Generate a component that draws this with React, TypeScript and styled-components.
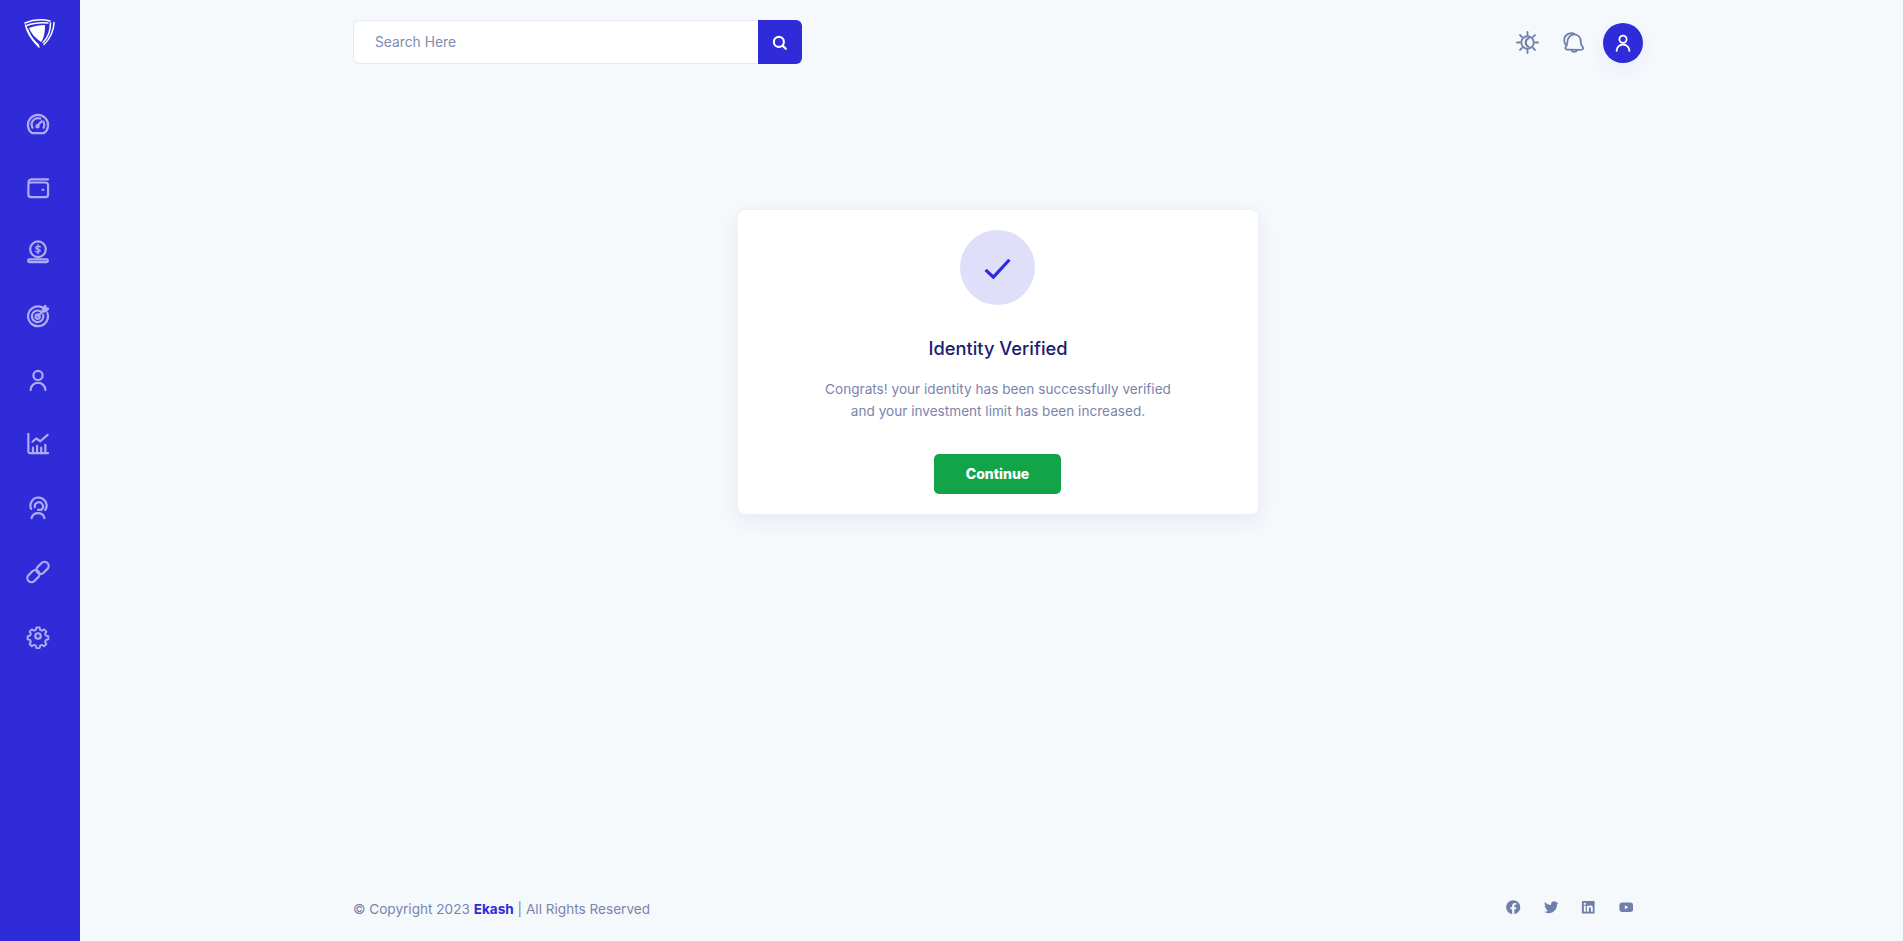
import styled, { createGlobalStyle } from 'styled-components';
import { FaFacebook, FaTwitter, FaLinkedin, FaYoutube } from 'react-icons/fa';

const GlobalStyle = createGlobalStyle`
  html, body {
    margin: 0;
    background: #f5f9fc;
    font-family: Inter, "Noto Sans", sans-serif;
  }
  * {
    box-sizing: border-box;
  }
`;

const GaugeIcon = () => (
  <svg viewBox="0 0 24 24">
    <path d="M5.500 22a11 11 0 1 1 13 0z" />
    <path d="M6 16a7 7 0 0 1 8.500-10" />
    <path d="M18 9.500a7 7 0 0 1 .1 6.500" />
    <path d="M11 14.200l5-5.200" />
    <circle cx="11.500" cy="14.500" r="1.200" />
  </svg>
);

const WalletIcon = () => (
  <svg viewBox="0 0 24 24">
    <path d="M23 2.500H5a3.500 3.500 0 0 0-3.500 3.500" />
    <rect x="1.500" y="6" width="21.500" height="16" rx="3" />
    <path d="M17 14h.8" />
  </svg>
);

const CoinIcon = () => (
  <svg viewBox="0 0 24 24">
    <circle cx="12" cy="9" r="8.500" />
    <path d="M14.500 6.500c-.6-1-4.600-1.200-5 .8-.2 2.200 5.200 1.200 5 3.400-.2 1.800-4.200 1.800-5.200.5M12 4v10" strokeWidth="1.500" />
    <rect x="1.200" y="20" width="21.600" height="3" rx="1.500" />
  </svg>
);

const TargetIcon = () => (
  <svg viewBox="0 0 24 24">
    <path d="M16.500 2.500a10.800 10.800 0 1 0 5.800 6.500" />
    <path d="M14.600 6.800a6.300 6.300 0 1 0 3 3.600" />
    <path d="M12.800 10.600a2.400 2.400 0 1 0 1.200 1.800" />
    <path d="M12 12l6-6" />
    <path d="M17 7l.4-3.600L20 1l.7 2.500 2.300.5L20.400 7z" fill="currentColor" />
  </svg>
);

const UserIcon = () => (
  <svg viewBox="0 0 24 24">
    <circle cx="12" cy="7" r="5" />
    <path d="M4 23a8 8 0 0 1 16 0" />
  </svg>
);

const ChartIcon = () => (
  <svg viewBox="0 0 24 24">
    <path d="M1.500 1v19.500a1.500 1.500 0 0 0 1.500 1.500h20" />
    <path d="M6.500 22v-6M11 22v-8M15.500 22v-6M20 22v-9" />
    <path d="M6 9.500l4-3.500 4.500 3 8-7" />
  </svg>
);

const SupportIcon = () => (
  <svg viewBox="0 0 24 24">
    <path d="M4.500 13a8.800 8.800 0 1 1 15.500 1" />
    <path d="M8.500 11a4.500 4.500 0 1 1 7 3h-3.500" />
    <path d="M5 23a7.200 7.200 0 0 1 14 0" />
  </svg>
);

const LinkIcon = () => (
  <svg viewBox="0 0 24 24">
    <rect x="9.500" y="3" width="15" height="9" rx="4.500" transform="rotate(-45 17 7.500)" />
    <rect x="-0.500" y="12" width="15" height="9" rx="4.500" transform="rotate(-45 7 16.500)" />
  </svg>
);

const GearIcon = () => (
  <svg viewBox="0 0 24 24">
    <path d="M10 1.500h4l.7 3 2.300 1 2.600-1.600 2.800 2.800-1.600 2.600 1 2.300 3 .7v4l-3 .7-1 2.300 1.600 2.600-2.800 2.800-2.600-1.600-2.300 1-.7 3h-4l-.7-3-2.300-1-2.600 1.600-2.800-2.800 1.600-2.600-1-2.300-3-.7v-4l3-.7 1-2.300-1.600-2.600 2.800-2.800 2.600 1.600 2.300-1z" transform="translate(1.400 1.400) scale(.88)" />
    <circle cx="12" cy="12" r="3" />
  </svg>
);

const navIcons = [
  GaugeIcon,
  WalletIcon,
  CoinIcon,
  TargetIcon,
  UserIcon,
  ChartIcon,
  SupportIcon,
  LinkIcon,
  GearIcon,
];

export default function App() {
  return (
    <>
      <GlobalStyle />
      <Page>
        <Sidebar>
          <Logo viewBox="0 0 32 30">
            <path d="M5 9C10 7 16 6 21 6c0 7-1 13-4 17C11 19 7 14 5 9z" fill="#fff" />
            <g fill="none" stroke="#fff" strokeWidth="1.500" strokeLinecap="round">
              <path d="M1 4C8 1 18 0 26 2" />
              <path d="M3 6.500C9 4 17 3.500 24 4" />
              <path d="M30 3.500C30 11 26 20 20 25.500" />
              <path d="M26.500 4C26.500 11 23.500 19 19 23.500" />
              <path d="M1.500 6C3 13 9 22 15 28" />
              <path d="M3.500 10.500C5.500 16 10 22.500 14.500 26" />
            </g>
          </Logo>
          <NavList>
            {navIcons.map((Icon, i) => (
              <NavItem key={i}>
                <Icon />
              </NavItem>
            ))}
          </NavList>
        </Sidebar>
        <Main>
          <Header>
            <SearchBox>
              <SearchInput placeholder="Search Here" />
              <SearchButton>
                <svg viewBox="0 0 24 24">
                  <circle cx="11" cy="11" r="8" />
                  <path d="M17 17l5 5" />
                </svg>
              </SearchButton>
            </SearchBox>
            <HeaderActions>
              <HeaderIcon viewBox="0 0 24 24">
                <circle cx="12" cy="12" r="6.500" />
                <path d="M13.500 7.500a4.800 4.800 0 0 0 0 9 4.800 4.800 0 0 1-3.500-4.500 4.800 4.800 0 0 1 3.500-4.500z" fill="currentColor" />
                <path d="M12 1v3M12 20v3M1 12h3M20 12h3M4.200 4.200l2.100 2.100M17.700 17.700l2.100 2.100M4.200 19.800l2.100-2.100M17.700 6.300l2.100-2.100" />
              </HeaderIcon>
              <HeaderIcon viewBox="0 0 24 24">
                <path d="M7 19.500c-1 0-3.500 0-3.500-1.500 0-1.500 2-2.500 2-5.500S5.500 8 8 5.500s7-3 10 .5c2.500 2.800 1 5.500 2 8 .8 2 2.500 3 2 4.500-.3 1-2 1.200-3 1.200z" />
                <path d="M3.500 14C1 10 2 4 8 2.500c2.500-.6 4-.2 5 .5" />
                <path d="M10 20c.5 2.500 5 2.500 5.500 0" />
              </HeaderIcon>
              <Avatar>
                <svg viewBox="0 0 24 24">
                  <circle cx="12" cy="7" r="4.800" />
                  <path d="M3.500 22.500a8.500 8.500 0 0 1 17 0" />
                </svg>
              </Avatar>
            </HeaderActions>
          </Header>
          <Card>
            <CheckCircle>
              <svg viewBox="0 0 30 24">
                <path d="M2 14l8.500 8L28 3" />
              </svg>
            </CheckCircle>
            <Title>Identity Verified</Title>
            <Message>
              Congrats! your identity has been successfully verified
              <br />
              and your investment limit has been increased.
            </Message>
            <ContinueButton>Continue</ContinueButton>
          </Card>
          <Footer>
            <Copyright>
              © Copyright 2023 <strong>Ekash</strong> | All Rights Reserved
            </Copyright>
            <Socials>
              <FaFacebook />
              <FaTwitter />
              <FaLinkedin />
              <FaYoutube />
            </Socials>
          </Footer>
        </Main>
      </Page>
    </>
  );
}

const Page = styled.div`
  display: flex;
  min-height: 941px;
`;

const Sidebar = styled.aside`
  flex: 0 0 80px;
  display: flex;
  flex-direction: column;
  align-items: center;
  padding-top: 19px;
  background-color: #2f2bd9;
`;

const Logo = styled.svg`
  width: 32px;
  height: 30px;
`;

const NavList = styled.nav`
  display: flex;
  flex-direction: column;
  gap: 42px;
  margin: 64px 4px 0 0;
`;

const NavItem = styled.a`
  display: block;
  width: 22px;
  height: 22px;
  color: #aeabf2;

  svg {
    display: block;
    width: 100%;
    height: 100%;
    fill: none;
    stroke: currentColor;
    stroke-width: 2.400;
    stroke-linecap: round;
    stroke-linejoin: round;
    overflow: visible;
  }
`;

const Main = styled.main`
  flex: 1;
  display: flex;
  flex-direction: column;
  padding: 20px 260px 0 273px;
`;

const Header = styled.header`
  display: flex;
  justify-content: space-between;
  align-items: center;
  height: 44px;
`;

const SearchBox = styled.div`
  display: flex;
  width: 449px;
  height: 44px;
`;

const SearchInput = styled.input`
  flex: 1;
  min-width: 0;
  padding: 0 21px 0 21px;
  background: #fff;
  border: 1px solid #e4e9f2;
  border-right: none;
  border-radius: 6px 0 0 6px;
  outline: none;
  font-family: Inter, sans-serif;
  font-size: 13.800px;

  &::placeholder {
    color: #7f8bb0;
    opacity: 1;
  }
`;

const SearchButton = styled.button`
  flex: 0 0 44px;
  display: flex;
  align-items: center;
  justify-content: center;
  padding: 0 2px 0 0;
  background: #2f2bd9;
  border: none;
  border-radius: 0 6px 6px 0;

  svg {
    width: 15px;
    height: 15px;
    fill: none;
    stroke: #fff;
    stroke-width: 3.400;
    stroke-linecap: round;
  }
`;

const HeaderActions = styled.div`
  display: flex;
  align-items: center;
  gap: 23px;
  margin-top: 1px;
`;

const HeaderIcon = styled.svg`
  width: 23px;
  height: 23px;
  color: #6f7fa9;
  fill: none;
  stroke: currentColor;
  stroke-width: 1.900;
  stroke-linecap: round;
  stroke-linejoin: round;
`;

const Avatar = styled.div`
  display: flex;
  align-items: center;
  justify-content: center;
  width: 40px;
  height: 40px;
  margin-left: -5px;
  background: #2f2bd9;
  border-radius: 50%;
  box-shadow: 0 6px 20px rgba(47, 43, 217, 0.06);

  svg {
    width: 18px;
    height: 18px;
    fill: none;
    stroke: #fff;
    stroke-width: 2.400;
    stroke-linecap: round;
  }
`;

const Card = styled.section`
  align-self: center;
  display: flex;
  flex-direction: column;
  align-items: center;
  width: 522px;
  height: 306px;
  margin-top: 145px;
  padding-top: 20px;
  background: #fff;
  border: 1px solid #eef1f7;
  border-radius: 8px;
  box-shadow: 0 6px 20px rgba(40, 60, 110, 0.07);
`;

const CheckCircle = styled.div`
  display: flex;
  align-items: center;
  justify-content: center;
  width: 75px;
  height: 75px;
  margin-right: 1px;
  background: #e0dff9;
  border-radius: 50%;

  svg {
    width: 29px;
    height: 22px;
    fill: none;
    stroke: #2f2bd9;
    stroke-width: 3.500;
  }
`;

const Title = styled.h3`
  margin: 32px 0 0;
  color: #1c1c6e;
  font-size: 18.300px;
  font-weight: 500;
  line-height: 22px;
`;

const Message = styled.p`
  margin: 19px 0 0;
  color: #7a84ad;
  font-size: 13.600px;
  line-height: 22px;
  text-align: center;
`;

const ContinueButton = styled.button`
  width: 127px;
  height: 40px;
  margin: 32px 1px 0 0;
  padding: 0 0 2px;
  background: #13a44a;
  border: none;
  border-radius: 5px;
  color: #fff;
  font-family: Inter, sans-serif;
  font-size: 14px;
  font-weight: 800;
`;

const Footer = styled.footer`
  display: flex;
  justify-content: space-between;
  align-items: center;
  margin-top: auto;
  padding: 0 10px 24px 0;
`;

const Copyright = styled.div`
  color: #7a84ad;
  font-size: 13.600px;

  strong {
    color: #2f2bd9;
    font-weight: 700;
  }
`;

const Socials = styled.div`
  display: flex;
  align-items: center;
  gap: 23px;
  margin-top: -4px;
  color: #6f7fa9;
  font-size: 14.500px;
`;
